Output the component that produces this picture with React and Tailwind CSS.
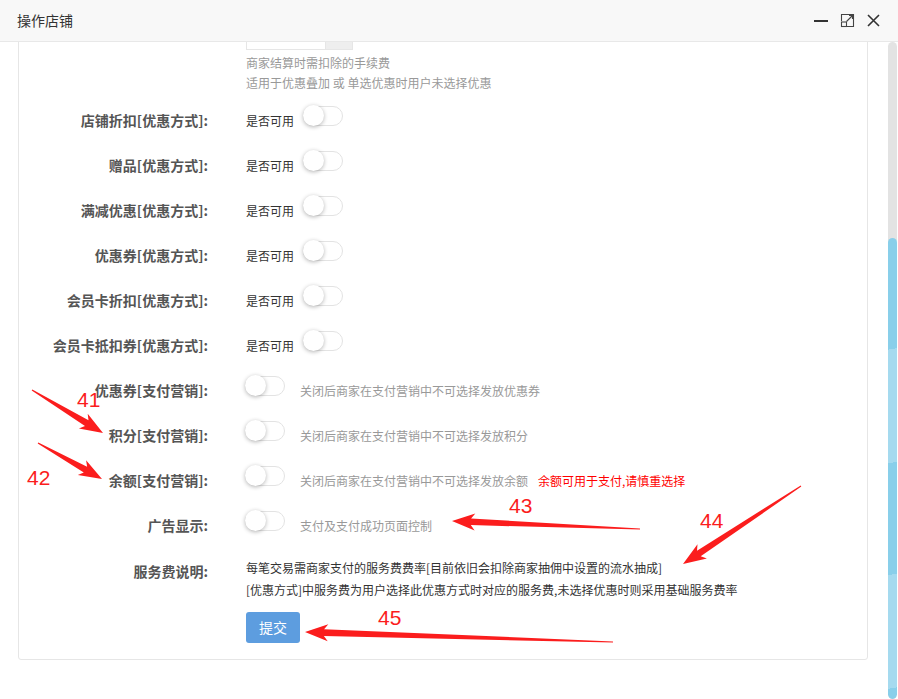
import React from 'react';

const FONT = "font-['Noto_Sans_CJK_SC','Noto_Sans',sans-serif]";

const Toggle = () => (
  <div className="mb-[10px] flex h-[20px] w-[40px] shrink-0 items-center rounded-full border border-[#e3e3e3] bg-white">
    <div className="-ml-px h-[21px] w-[21px] rounded-full bg-white shadow-[0_1px_4px_rgba(0,0,0,0.3)]" />
  </div>
);

const Row = ({ label, children }) => (
  <div className="flex h-[45px] items-center">
    <div className="w-[189px] shrink-0 text-right text-[14px] font-bold text-[#555]">{label}:</div>
    <div className="ml-[38px] flex items-center">{children}</div>
  </div>
);

// tapered red annotation arrow, tail -> tip
const arrowPoints = (tx, ty, hx, hy) => {
  const dx = hx - tx, dy = hy - ty, len = Math.hypot(dx, dy);
  const ux = dx / len, uy = dy / len, nx = -uy, ny = ux;
  const L = 19, hw = 8.5, sw = 3.3, back = 4;
  const bx = hx - ux * L, by = hy - uy * L;
  const p = [
    [tx + nx * 0.6, ty + ny * 0.6],
    [bx + nx * sw, by + ny * sw],
    [bx + nx * hw - ux * back, by + ny * hw - uy * back],
    [hx, hy],
    [bx - nx * hw - ux * back, by - ny * hw - uy * back],
    [bx - nx * sw, by - ny * sw],
    [tx - nx * 0.6, ty - ny * 0.6],
  ];
  return p.map(([x, y]) => `${x.toFixed(1)},${y.toFixed(1)}`).join(' ');
};

const arrows = [
  [32, 390, 103, 433],
  [38, 443, 102, 479],
  [640, 529, 452, 521],
  [801, 486, 683, 564],
  [613, 642, 305, 632],
];

const labels = [
  ['41', 77, 407],
  ['42', 27, 485],
  ['43', 509, 513],
  ['44', 700, 528],
  ['45', 378, 625],
];

const discountRows = ['店铺折扣[优惠方式]', '赠品[优惠方式]', '满减优惠[优惠方式]', '优惠券[优惠方式]', '会员卡折扣[优惠方式]', '会员卡抵扣券[优惠方式]'];

export default function App() {
  return (
    <div className={`relative h-[699px] w-[898px] overflow-hidden bg-white ${FONT}`}>
      {/* title bar */}
      <div className="flex h-[42px] items-center border-b border-[#e8e8e8] bg-[#f8f8f8] pl-[17px] pr-[18px]">
        <span className="text-[14px] text-[#333]">操作店铺</span>
        <div className="ml-auto flex items-center">
          <div className="h-[2px] w-[14px] bg-[#333]" />
          <svg width="15" height="15" viewBox="0 0 15 15" className="ml-[12px]" fill="none" stroke="#444" strokeWidth="1.1">
            <path d="M1.5 8 V1.5 H13.5 V13.5 H7" />
            <rect x="1.5" y="9" width="5" height="4.5" />
            <path d="M6.5 8.5 L12.5 2.5 M9 2.5 H12.5 V6" />
          </svg>
          <svg width="13" height="13" viewBox="0 0 13 13" className="ml-[12px]" stroke="#333" strokeWidth="1.6">
            <path d="M1 1 L12 12 M12 1 L1 12" />
          </svg>
        </div>
      </div>

      <div className="flex h-[657px]">
        <div className="w-[888px] overflow-hidden pl-[18px] pr-[20px]">
          <div className="-mt-[23px] rounded-b-[3px] border border-[#e6e6e6] pb-[16px]">
            <div className="ml-[227px] flex h-[30px]">
              <div className="w-[80px] border border-[#e6e6e6] bg-white" />
              <div className="w-[27px] border border-l-0 border-[#e6e6e6] bg-[#eee]" />
            </div>
            <div className="ml-[227px] mt-[3px] text-[12px] leading-[20px] text-[#999]">
              <p>商家结算时需扣除的手续费</p>
              <p>适用于优惠叠加 或 单选优惠时用户未选择优惠</p>
            </div>

            <div className="mt-[5px]">
              {discountRows.map((l) => (
                <Row key={l} label={l}>
                  <span className="text-[12px] text-[#333]">是否可用</span>
                  <div className="ml-[9px]"><Toggle /></div>
                </Row>
              ))}
              <Row label="优惠券[支付营销]">
                <div className="-ml-px"><Toggle /></div>
                <span className="ml-[15px] text-[12px] text-[#999]">关闭后商家在支付营销中不可选择发放优惠券</span>
              </Row>
              <Row label="积分[支付营销]">
                <div className="-ml-px"><Toggle /></div>
                <span className="ml-[15px] text-[12px] text-[#999]">关闭后商家在支付营销中不可选择发放积分</span>
              </Row>
              <Row label="余额[支付营销]">
                <div className="-ml-px"><Toggle /></div>
                <span className="ml-[15px] text-[12px] text-[#999]">关闭后商家在支付营销中不可选择发放余额</span>
                <span className="ml-[10px] text-[12px] text-[#ff0000]">余额可用于支付,请慎重选择</span>
              </Row>
              <Row label="广告显示">
                <div className="-ml-px"><Toggle /></div>
                <span className="ml-[15px] text-[12px] text-[#999]">支付及支付成功页面控制</span>
              </Row>
            </div>

            <div className="mt-[9px] flex">
              <div className="w-[189px] shrink-0 pt-[3px] text-right text-[14px] font-bold leading-[22px] text-[#555]">服务费说明:</div>
              <div className="ml-[38px] text-[12px] leading-[22px] text-[#333]">
                <p>每笔交易需商家支付的服务费费率[目前依旧会扣除商家抽佣中设置的流水抽成]</p>
                <p>[优惠方式]中服务费为用户选择此优惠方式时对应的服务费,未选择优惠时则采用基础服务费率</p>
              </div>
            </div>

            <div className="ml-[227px] mt-[11px]">
              <button className="h-[31px] w-[54px] rounded-[3px] bg-[#5d9ddf] text-[14px] text-white">提交</button>
            </div>
          </div>
        </div>

        {/* scrollbar */}
        <div className="flex w-[9px] flex-col overflow-hidden rounded-full bg-[#e3e3e3]">
          <div className="mt-[196px] flex-1 rounded-full bg-[repeating-linear-gradient(170deg,#89cfea_0px,#89cfea_110px,#a5daef_110px,#a5daef_222px)]" />
        </div>
      </div>

      {/* annotation overlay */}
      <svg className="pointer-events-none absolute left-0 top-0" width="898" height="699">
        {arrows.map((a, i) => (
          <polygon key={i} points={arrowPoints(...a)} fill="#fb1d1d" />
        ))}
        {labels.map(([t, x, y]) => (
          <text key={t} x={x} y={y} fill="#fb1d1d" fontSize="21" fontFamily="Liberation Sans, Arial, sans-serif">{t}</text>
        ))}
      </svg>
    </div>
  );
}
